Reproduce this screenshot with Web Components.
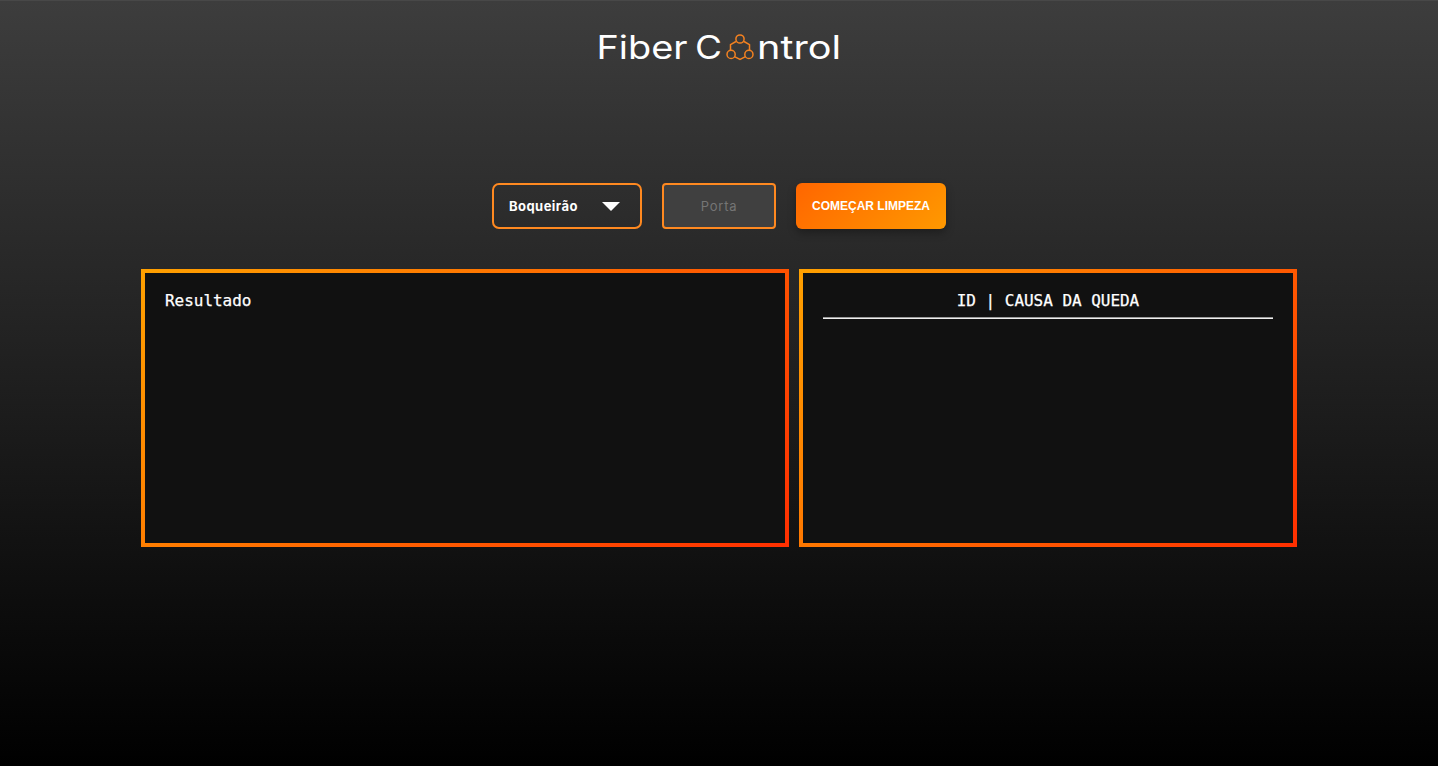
<!DOCTYPE html>
<html lang="pt-BR"><head><meta charset="utf-8"><title>Fiber Control</title>
<style>html,body{margin:0;height:100%;background:#000}body{overflow:hidden}</style></head>
<body><fiber-app></fiber-app>
<script>
const define=(name,html)=>customElements.define(name,class extends HTMLElement{
  constructor(){super();this.attachShadow({mode:'open'}).innerHTML=html;}
});
define('fiber-logo',`<style>:host{display:block;width:244px;height:40px}svg{display:block}text{font-family:Inter,sans-serif;font-size:32px;font-weight:400;fill:#fff}</style>
<svg width="244" height="40" viewBox="0 0 244 40">
<text x="-.5" y="31" textLength="91" lengthAdjust="spacingAndGlyphs">Fiber</text>
<text x="98" y="31" textLength="27" lengthAdjust="spacingAndGlyphs">C</text>
<g fill="none" stroke="#f58220" stroke-width="1.5"><circle cx="143" cy="11" r="4.1"/><circle cx="134.1" cy="26.4" r="4.1"/><circle cx="151.900" cy="26.400" r="4.100"/>
<path d="M139 13.500L133.500 16.700V22.200M147 13.500L152.500 16.700V22.200M137.500 28.700L143 31.500L148.500 28.700"/></g>
<text x="160" y="31" textLength="84" lengthAdjust="spacingAndGlyphs">ntrol</text></svg>`);
define('region-select',`<style>:host{box-sizing:border-box;display:flex;align-items:center;justify-content:space-between;width:150px;height:46px;padding:0 20px 0 15px;border:2px solid #ff8920;border-radius:7px;color:#fff;font:700 13px Inter,sans-serif;letter-spacing:.45px}svg{display:block;margin-top:1px}</style>
<slot></slot><svg width="18" height="9"><path d="M0 0H18L9 9Z" fill="#fff"/></svg>`);
define('port-field',`<style>:host{box-sizing:border-box;display:flex;align-items:center;justify-content:center;width:114px;height:46px;border:2px solid #ff8920;border-radius:4px;background:#404040;color:#757575;font:400 13px Inter,sans-serif;letter-spacing:.8px}</style><slot></slot>`);
define('action-button',`<style>:host{box-sizing:border-box;display:flex;align-items:center;justify-content:center;width:150px;height:46px;border-radius:6px;background:linear-gradient(135deg,#ff6600,#ff9900);box-shadow:0 4px 8px rgba(0,0,0,.3);color:#fff;font:700 12px "Liberation Sans",Arial,sans-serif;white-space:nowrap}</style><slot></slot>`);
define('result-panel',`<style>:host{box-sizing:border-box;display:block;height:278px;padding:17px 20px;border:4px solid;border-image:linear-gradient(135deg,#ffa000,#ff3000) 1;background:#111;color:#fff;font:16px/22px "DejaVu Sans Mono",monospace;letter-spacing:-.03px;-webkit-text-stroke:.25px #fff}</style><slot></slot>`);
define('panel-heading',`<style>:host{display:block;text-align:center}hr{height:2px;margin:5px 0 0;border:0;background:linear-gradient(#9a9a9a 50%,#eee 50%)}</style><slot></slot><hr>`);
define('fiber-app',`<style>:host{box-sizing:border-box;display:flex;flex-direction:column;align-items:center;height:766px;padding-top:27px;border-top:1px solid #484848;background:linear-gradient(#3d3d3d,#000)}
.controls{display:flex;gap:20px;margin-top:115px}.panels{display:grid;grid-template-columns:648px 498px;gap:10px;margin-top:40px}</style>
<fiber-logo></fiber-logo><div class="controls"><region-select>Boqueirão</region-select><port-field>Porta</port-field><action-button>COMEÇAR LIMPEZA</action-button></div>
<div class="panels"><result-panel>Resultado</result-panel><result-panel><panel-heading>ID | CAUSA DA QUEDA</panel-heading></result-panel></div>`);
</script></body></html>
